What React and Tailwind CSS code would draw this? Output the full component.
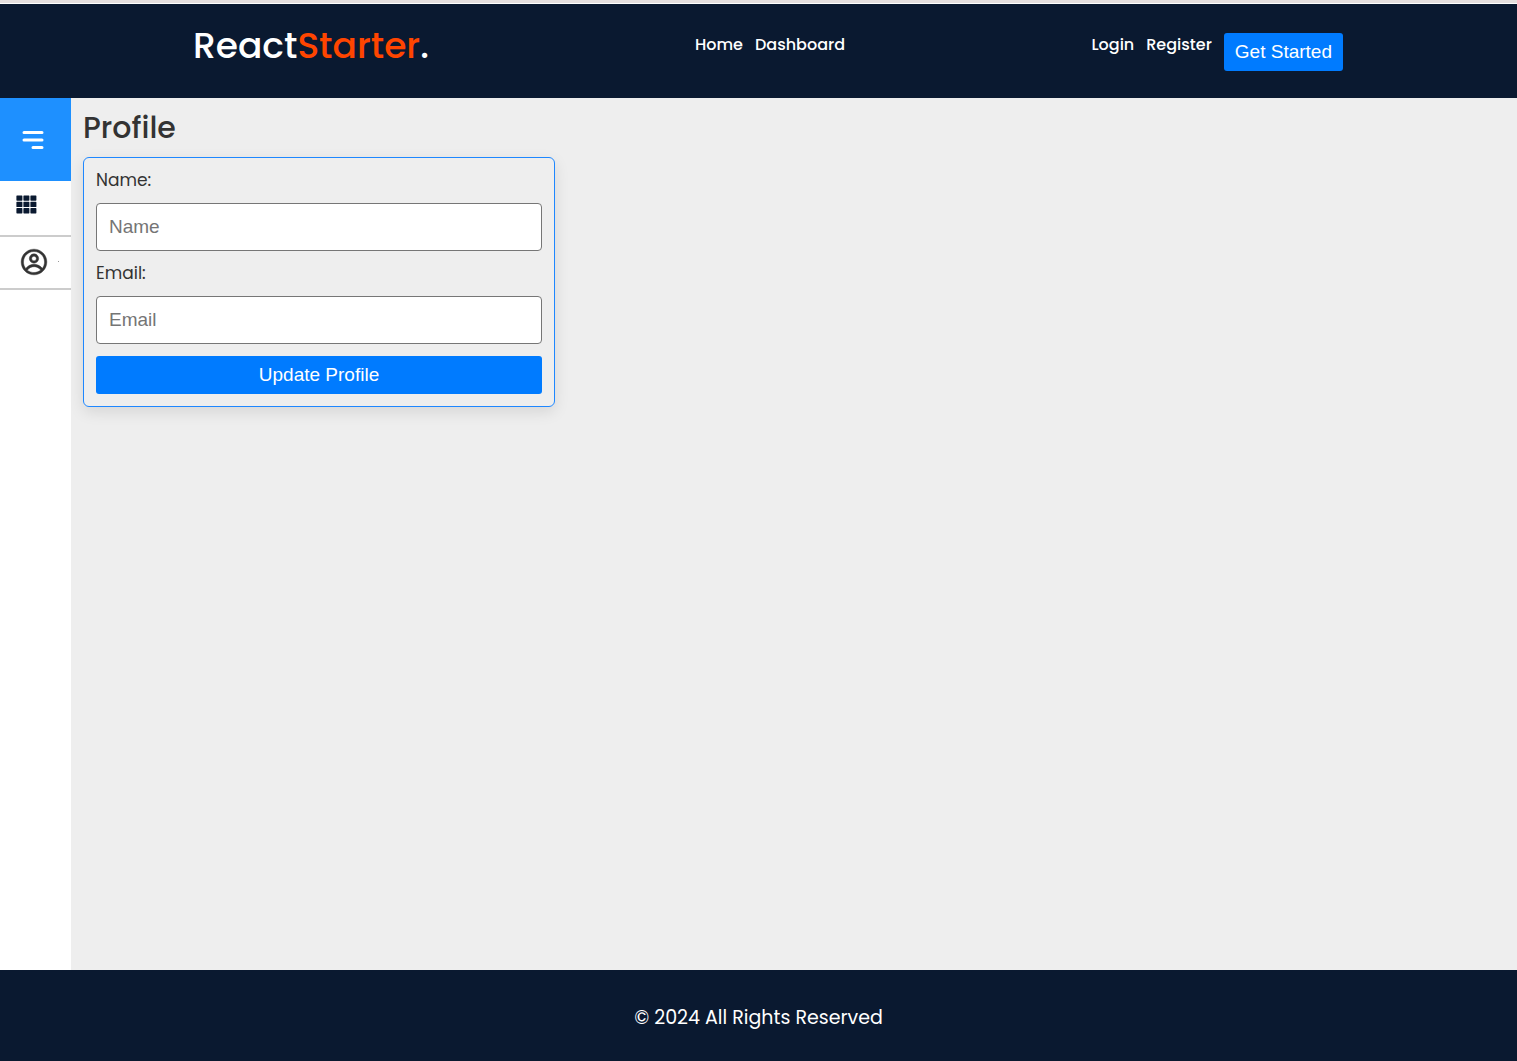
import { HiMenuAlt3 } from "react-icons/hi";
import { CgProfile } from "react-icons/cg";

const field =
  "h-12 w-full rounded border border-[#767676] bg-white px-3 font-['Liberation_Sans',sans-serif] text-[19px] text-[#333] placeholder:text-[#757575]";
const button =
  "h-[38px] rounded-[3px] bg-[#007bff] px-[11px] font-['Liberation_Sans',sans-serif] text-[19px] font-normal text-white";

function GridIcon() {
  return (
    <svg viewBox="0 0 21 19" className="h-[19px] w-[21px] text-[#0a1930]" fill="currentColor" aria-hidden="true">
      {[0.4, 7.4, 14.4].map((x) =>
        [0.4, 6.8, 13.1].map((y) => <rect key={`${x}-${y}`} x={x} y={y} width="6" height="5.3" rx="0.6" />)
      )}
    </svg>
  );
}

function Header() {
  return (
    <header className="border-t-3 border-[#e5dfde]">
      <div className="grid h-[95px] grid-cols-[1fr_auto_1fr] items-start border-t border-white bg-[#0a1930] pt-6 pr-[174px] pl-[193px] text-white">
        <a href="#home" className="text-[36px] leading-9 font-medium">
          React<span className="text-[#ff4500]">Starter</span>.
        </a>
        <nav className="flex gap-3 pt-[5px] pl-1 text-base font-medium">
          <a href="#home">Home</a>
          <a href="#dashboard">Dashboard</a>
        </nav>
        <div className="flex gap-3 justify-self-end pt-[5px] text-base font-medium">
          <a href="#login">Login</a>
          <a href="#register">Register</a>
          <button type="button" className={button}>Get Started</button>
        </div>
      </div>
    </header>
  );
}

function Sidebar() {
  return (
    <aside className="w-[71px] shrink-0 bg-white">
      <button type="button" aria-label="Toggle menu" className="flex h-[83px] w-full items-center bg-[#1e90ff] pl-[18px] text-white">
        <HiMenuAlt3 className="size-[30px]" />
      </button>
      <a href="#dashboard" aria-label="Dashboard" className="flex h-14 items-start border-b-2 border-[#ccc] pt-[14px] pl-4">
        <GridIcon />
      </a>
      <a href="#profile" aria-label="Profile" className="flex h-[53px] items-start gap-[10px] border-b-2 border-[#ccc] pt-[11px] pl-5 text-[#333]">
        <CgProfile className="size-7" strokeWidth="0.4" stroke="currentColor" />
        <span className="mt-[13px] size-px bg-[#999]" />
      </a>
    </aside>
  );
}

export default function App() {
  return (
    <div className="flex min-h-screen flex-col bg-[#eee] font-[Poppins,Inter,sans-serif] text-[#333]">
      <Header />
      <div className="flex grow">
        <Sidebar />
        <main className="grow p-3">
          <h1 className="text-[30px] leading-9 font-medium">Profile</h1>
          <form className="mt-[11px] flex w-full max-w-[472px] flex-col rounded-md border border-[#1e87ff] p-3 shadow-[0_5px_15px_rgba(0,0,0,0.1)]">
            <label htmlFor="name" className="mb-3 text-[17px] leading-[21px]">Name:</label>
            <input id="name" type="text" placeholder="Name" className={field} />
            <label htmlFor="email" className="my-3 text-[17px] leading-[21px]">Email:</label>
            <input id="email" type="email" placeholder="Email" className={field} />
            <button type="button" className={`${button} mt-3`}>Update Profile</button>
          </form>
        </main>
      </div>
      <footer className="flex h-[91px] items-center justify-center bg-[#0a1930] pt-1.5 text-[19px] text-white">
        <p>© 2024 All Rights Reserved</p>
      </footer>
    </div>
  );
}
